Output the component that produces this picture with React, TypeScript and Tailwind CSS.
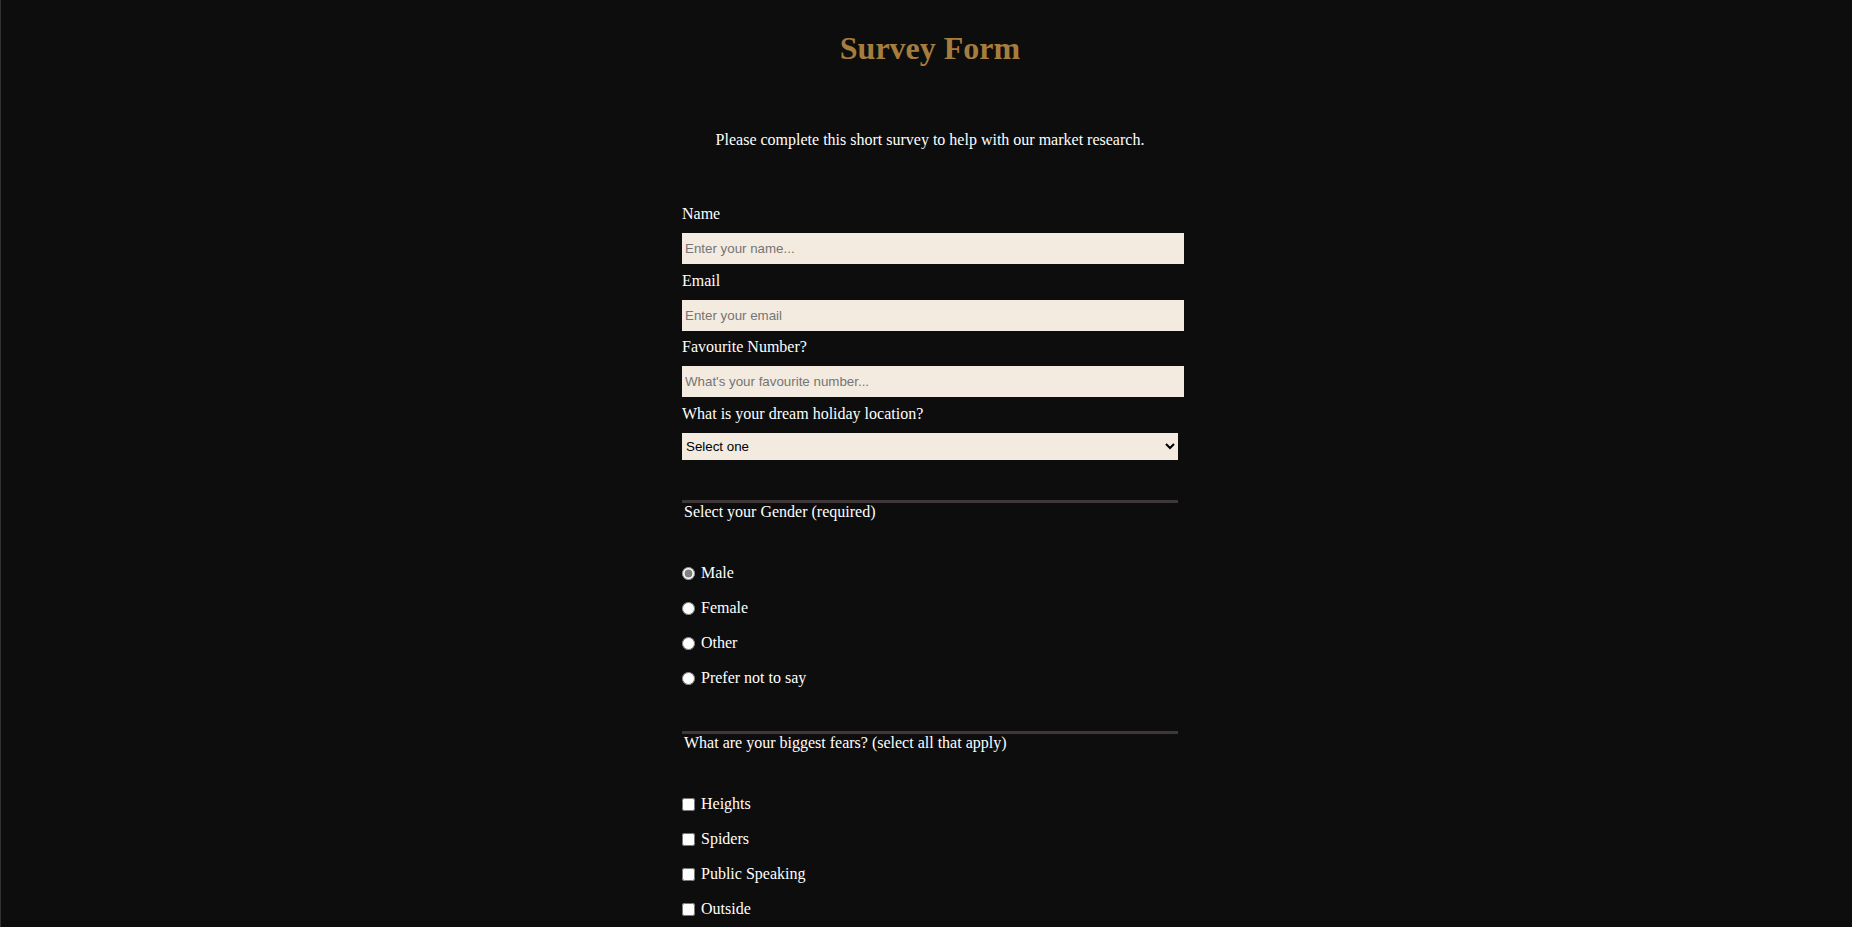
import { useState } from 'react'

const genders = ['Male', 'Female', 'Other', 'Prefer not to say']
const fears = ['Heights', 'Spiders', 'Public Speaking', 'Outside']

export default function App() {
  const [gender, setGender] = useState('Male')
  const [picked, setPicked] = useState<string[]>([])

  const toggleFear = (f: string) => {
    setPicked((p) => (p.includes(f) ? p.filter((x) => x !== f) : [...p, f]))
  }

  const inputClass =
    "block w-[502px] h-[31px] px-[3px] bg-[#f3ebdf] text-black font-['Liberation_Sans',Arial,sans-serif] text-[13.33px] placeholder:text-[#757575] outline-none"

  return (
    <div className="min-h-screen bg-[#0d0d0d] border-l border-[#333333] pl-[7px] pb-20 text-white font-['Liberation_Serif','Times_New_Roman',serif]">
      <h1 className="pt-[30px] text-center text-[32px] leading-[37px] font-bold text-[#a57d3f]">
        Survey Form
      </h1>
      <p className="mt-[64px] text-center text-[16px] leading-[18px]">
        Please complete this short survey to help with our market research.
      </p>

      <form className="mx-auto w-[508px] pl-[6px] mt-[56px] text-[16px] leading-[18px]">
        <label htmlFor="name" className="block mb-[10px]">Name</label>
        <input id="name" type="text" placeholder="Enter your name..." className={inputClass} />

        <label htmlFor="email" className="block mt-[7.5px] mb-[10px]">Email</label>
        <input id="email" type="email" placeholder="Enter your email" className={inputClass} />

        <label htmlFor="number" className="block mt-[7.5px] mb-[10px]">Favourite Number?</label>
        <input id="number" type="number" placeholder="What's your favourite number..." className={inputClass} />

        <label htmlFor="holiday" className="block mt-[7.5px] mb-[10px]">What is your dream holiday location?</label>
        <select
          id="holiday"
          defaultValue=""
          className="block w-[496px] h-[27px] bg-[#f3ebdf] text-black font-['Liberation_Sans',Arial,sans-serif] text-[13.33px] outline-none"
        >
          <option value="">Select one</option>
          <option value="beach">Beach resort</option>
          <option value="mountains">Mountains</option>
          <option value="city">City break</option>
        </select>

        <div className="mt-[40px] w-[496px] border-t-[3px] border-[#3e3637]">
          <p className="pl-[2px]">Select your Gender (required)</p>
          <div className="mt-[35px]">
            {genders.map((g) => (
              <label key={g} className="flex items-center h-[35px]">
                <input
                  type="radio"
                  name="gender"
                  checked={gender === g}
                  onChange={() => setGender(g)}
                  className="w-[13px] h-[13px] mr-[6px] accent-[#808080]"
                />
                {g}
              </label>
            ))}
          </div>
        </div>

        <div className="mt-[35px] w-[496px] border-t-[3px] border-[#3e3637]">
          <p className="pl-[2px]">What are your biggest fears? (select all that apply)</p>
          <div className="mt-[35px]">
            {fears.map((f) => (
              <label key={f} className="flex items-center h-[35px]">
                <input
                  type="checkbox"
                  checked={picked.includes(f)}
                  onChange={() => toggleFear(f)}
                  className="w-[13px] h-[13px] mr-[6px]"
                />
                {f}
              </label>
            ))}
          </div>
        </div>

        <div className="mt-[36px] w-[496px] border-t-[3px] border-[#3e3637]">
          <label htmlFor="comments" className="block pl-[2px] mb-[10px]">Any other comments?</label>
          <textarea
            id="comments"
            rows={4}
            className="block w-[496px] px-[3px] bg-[#f3ebdf] text-black font-['Liberation_Sans',Arial,sans-serif] text-[13.33px] outline-none"
          />
        </div>

        <button
          type="submit"
          className="mt-6 px-4 py-1 bg-[#a57d3f] text-[#0d0d0d] font-bold"
        >
          Submit
        </button>
      </form>
    </div>
  )
}
